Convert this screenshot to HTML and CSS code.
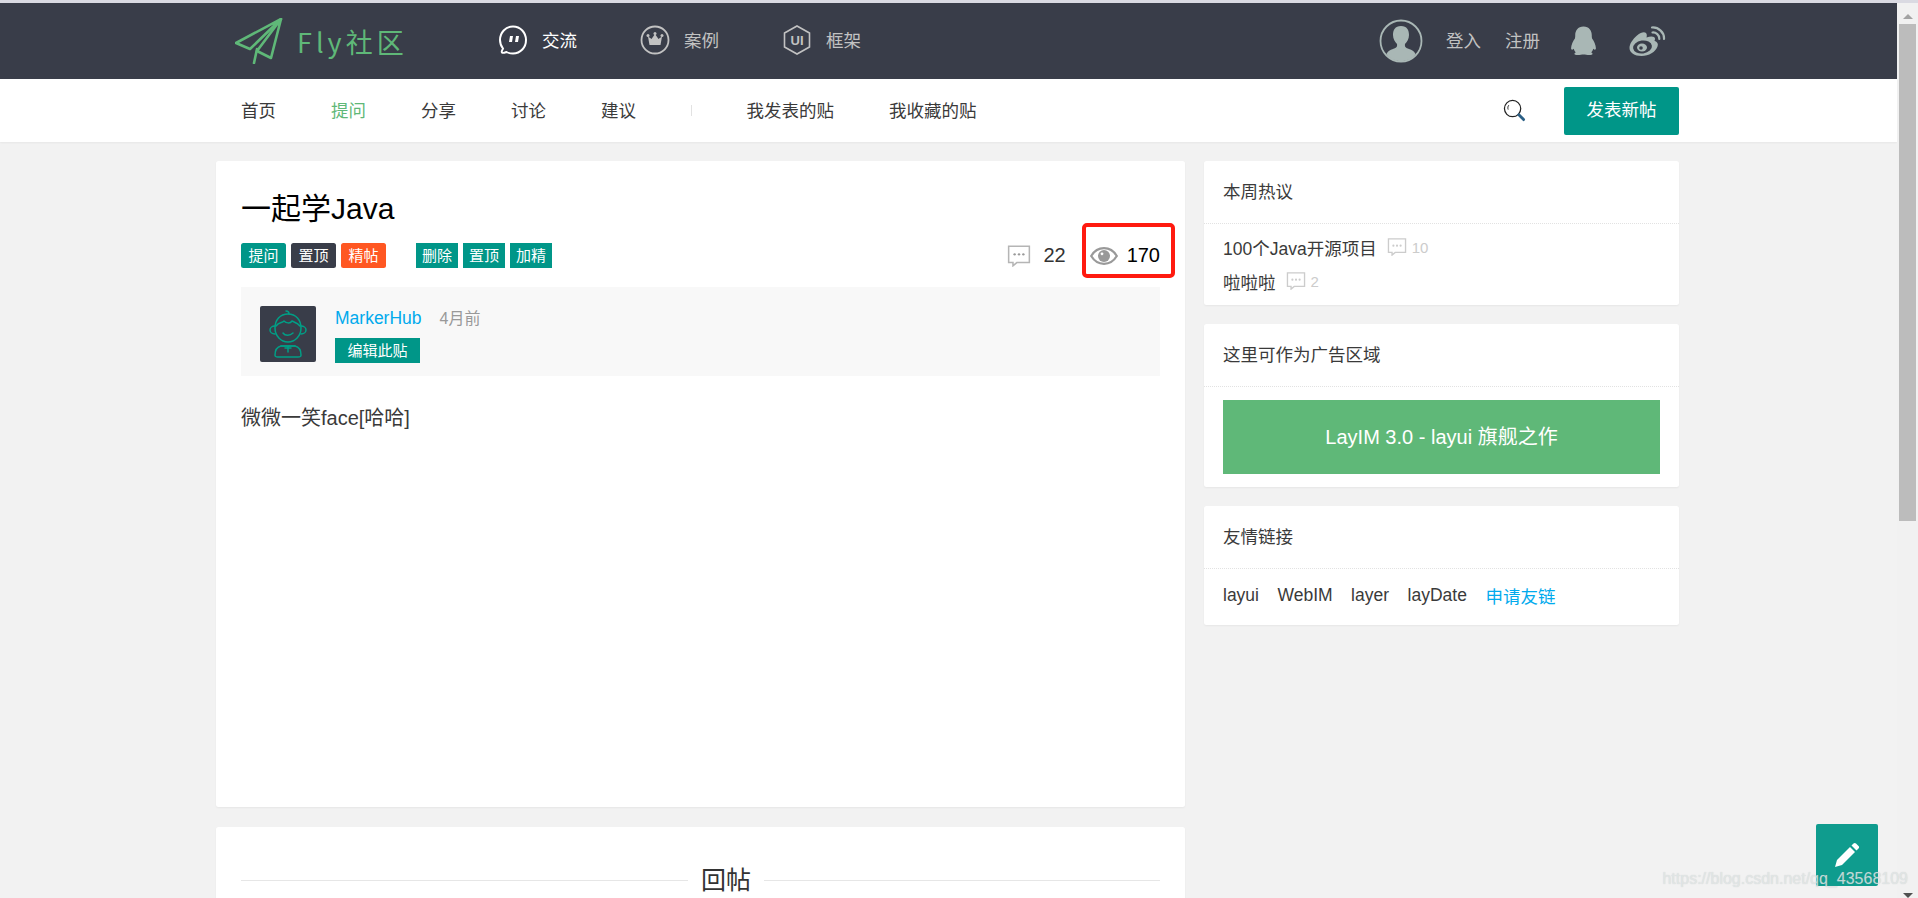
FILE: index.html
```html
<!DOCTYPE html>
<html lang="zh-CN">
<head>
<meta charset="UTF-8">
<title>一起学Java - Fly社区</title>
<link rel="stylesheet" href="styles.css">
</head>
<body>
<div class="top-strip"></div>
<div class="app">
<div class="page">

    <!-- 顶部导航 -->
    <header class="header">
        <div class="logo">
            <svg class="logo-icon" viewBox="0 0 48 46" fill="none" stroke="#5fb878" stroke-width="2.600" stroke-linecap="round" stroke-linejoin="round">
                <path d="M46 1 1 25 15 31Z"/>
                <path d="M46 1 36 40 22 33Z"/>
                <path d="M22 31 19 45"/>
            </svg>
            <span class="logo-text">Fly社区</span>
        </div>
        <nav class="main-nav">
            <a class="main-nav-item active">
                <svg class="nav-icon" viewBox="0 0 30 30">
                    <path d="M15 1.500C7.500 1.500 2 7.500 2 15c0 3.500 1 6 3 8.500-.5 1.500-2 3-1 4s3 0 4.500-.5c2 1.200 4 1.500 6.500 1.500 7.500 0 13-6 13-13.500S22.500 1.500 15 1.500Z" fill="none" stroke="#fff" stroke-width="2"/>
                    <path d="M12 11h3l-1 6h-3ZM18 11h3l-1 6h-3Z" fill="#fff"/>
                </svg>
                交流
            </a>
            <a class="main-nav-item">
                <svg class="nav-icon" viewBox="0 0 30 30">
                    <circle cx="15" cy="15" r="13.500" fill="none" stroke="#c2c2c2" stroke-width="1.800"/>
                    <path d="M8 11.500l3.500 2.500L15 9l3.500 5 3.500-2.500L20.500 20h-11Z" fill="#c2c2c2"/>
                    <circle cx="8" cy="10.500" r="1.500" fill="#c2c2c2"/>
                    <circle cx="15" cy="8.500" r="1.500" fill="#c2c2c2"/>
                    <circle cx="22" cy="10.500" r="1.500" fill="#c2c2c2"/>
                </svg>
                案例
            </a>
            <a class="main-nav-item">
                <svg class="nav-icon" viewBox="0 0 28 30">
                    <path d="M14 1 26.500 8v14L14 29 1.500 22V8Z" fill="none" stroke="#c2c2c2" stroke-width="1.600"/>
                    <text x="14" y="20" text-anchor="middle" class="ui-mark">UI</text>
                </svg>
                框架
            </a>
        </nav>
        <div class="user-nav">
            <svg class="user-avatar" viewBox="0 0 44 44">
                <circle cx="22" cy="22" r="20.500" fill="none" stroke="#a9b7b5" stroke-width="1.800"/>
                <path d="M22 7c-6 0-8 4-8 9 0 4 2 7 4 9 .5 3-1 4-4 5-3 1-5 2-6.500 5C11 40 16 42 22 42s11-2 14.500-7c-1.500-3-3.500-4-6.500-5-3-1-4.500-2-4-5 2-2 4-5 4-9 0-5-2-9-8-9Z" fill="#a9b7b5"/>
            </svg>
            <a class="user-link">登入</a>
            <a class="user-link">注册</a>
            <svg class="qq-icon" viewBox="0 0 26 29">
                <path d="M13 .5C7.500.5 5 4.500 5 9c0 1.200 0 2-.3 3C3 14.500 1 18 1 21.500c0 1.500 1 2 2.500.5.500 1.500 1 2.500 2 3.500C4 26 3.500 27.500 6 28c2.500.5 5-.5 7-.5s4.500 1 7 .5c2.500-.5 2-2 .5-2.500 1-1 1.500-2 2-3.500 1.500 1.500 2.500 1 2.500-.5 0-3.500-2-7-3.700-9.500-.3-1-.3-1.800-.3-3C21 4.500 18.500.5 13 .5Z" fill="#a9b7b5"/>
            </svg>
            <svg class="weibo-icon" viewBox="0 0 37 31">
                <path d="M26 15c2.500 1 3.500 3 2.500 5.500C26.500 26 20 30 12.500 30 5.500 30 .5 26.500.5 22c0-4 3-8.500 7.500-12.500 4-3.500 7.500-4 9-2.500 1 1 1 2.800.5 4.500 3-1.200 6-1.500 7.500-.5 1.200.8 1.300 2.200.5 4Z" fill="#a9b7b5"/>
                <ellipse cx="13.500" cy="21" rx="9.500" ry="6.500" fill="#393d49" transform="rotate(-8 13.500 21)"/>
                <ellipse cx="13" cy="21.500" rx="5" ry="4" fill="#a9b7b5"/>
                <circle cx="12" cy="22" r="1.800" fill="#393d49"/>
                <path d="M23 1.500c6.500-.5 12.500 5 12 11.500M23.500 6.500c3.500-.3 7 2.500 6.800 6.500" fill="none" stroke="#a9b7b5" stroke-width="2.200" stroke-linecap="round"/>
            </svg>
        </div>
    </header>

    <!-- 二级导航 -->
    <div class="sub-nav">
        <a class="sub-nav-item">首页</a>
        <a class="sub-nav-item current">提问</a>
        <a class="sub-nav-item">分享</a>
        <a class="sub-nav-item">讨论</a>
        <a class="sub-nav-item">建议</a>
        <span class="sub-nav-divider"></span>
        <a class="sub-nav-item">我发表的贴</a>
        <a class="sub-nav-item">我收藏的贴</a>
        <svg class="search-icon" viewBox="0 0 24 24" fill="none" stroke="#222">
            <circle cx="10" cy="10" r="8.500" stroke-width="1.300"/>
            <path d="M6 6.500c-1 1.200-1.200 3-.6 4.500" stroke-width="1"/>
            <path d="M16.500 16.500l5 5" stroke="#2b5f85" stroke-width="3" stroke-linecap="round"/>
        </svg>
        <a class="new-post">发表新帖</a>
    </div>

    <div class="content">
        <div class="content-main">
            <div class="panel post">
                <h1 class="post-title">一起学Java</h1>
                <div class="post-tags">
                    <span class="tag round">提问</span>
                    <span class="tag round dark">置顶</span>
                    <span class="tag round orange">精帖</span>
                    <span class="tag admin first">删除</span>
                    <span class="tag admin">置顶</span>
                    <span class="tag admin">加精</span>
                    <div class="post-stats">
                        <svg class="comment-icon" viewBox="0 0 22 20">
                            <path d="M1.500 1h19v15H9l-3.500 3v-3h-4Z" fill="none" stroke="#b5b5b5" stroke-width="1.400"/>
                            <circle cx="7" cy="8.500" r="1.100" fill="#999"/>
                            <circle cx="11" cy="8.500" r="1.100" fill="#999"/>
                            <circle cx="15" cy="8.500" r="1.100" fill="#999"/>
                        </svg>
                        <span class="stat-num">22</span>
                        <svg class="eye-icon" viewBox="0 0 28 18">
                            <path d="M1.200 9C4.500 3.500 9 1.200 14 1.200s9.500 2.300 12.800 7.800C23.500 14.500 19 16.800 14 16.800S4.500 14.500 1.200 9Z" fill="none" stroke="#999" stroke-width="2.200"/>
                            <circle cx="14" cy="9" r="6" fill="#999"/>
                            <circle cx="12" cy="6.800" r="1.400" fill="#fff"/>
                        </svg>
                        <span class="stat-num dark-num">170</span>
                        <span class="mark-box"></span>
                    </div>
                </div>
                <div class="author">
                    <svg class="author-avatar" viewBox="0 0 56 56" fill="none" stroke="#009f86" stroke-width="1.500" stroke-linecap="round" stroke-linejoin="round">
                        <rect width="56" height="56" rx="2" fill="#393d49" stroke="none"/>
                        <path d="M28 8c-8 0-13 6-13 14 0 8 6 14 13 14s13-6 13-14c0-8-5-14-13-14Z"/>
                        <path d="M16 20c3-4 6-3 8-5 2 2 6 3 8 0 2 1 6 2 8 5"/>
                        <path d="M26 5c2 0 3 1 3 3"/>
                        <path d="M15 20c-3 0-5 2-5 4s2 4 5 4M41 20c3 0 5 2 5 4s-2 4-5 4"/>
                        <path d="M23 27c2 3 7 3 10 0"/>
                        <path d="M21 40c-4 1-6 5-6 9 0 2 1 2 3 2h20c2 0 3 0 3-2 0-4-2-8-6-9Z"/>
                        <path d="M21 40h14M28 40v6M25 42h6"/>
                    </svg>
                    <div class="author-info">
                        <div class="author-line">
                            <a class="author-name">MarkerHub</a>
                            <span class="author-time">4月前</span>
                        </div>
                        <a class="tag edit-post">编辑此贴</a>
                    </div>
                </div>
                <div class="post-body">微微一笑face[哈哈]</div>
            </div>

            <div class="panel reply">
                <div class="reply-title"><span>回帖</span></div>
            </div>
        </div>

        <div class="sidebar">
            <div class="panel side-panel">
                <h3 class="side-title">本周热议</h3>
                <ul class="hot-list">
                    <li class="hot-item">
                        <a>100个Java开源项目</a>
                        <svg class="comment-small" viewBox="0 0 22 20">
                            <path d="M1.500 1h19v15H9l-3.500 3v-3h-4Z" fill="none" stroke="#ccc" stroke-width="1.500"/>
                            <circle cx="7" cy="8.500" r="1.200" fill="#ccc"/>
                            <circle cx="11" cy="8.500" r="1.200" fill="#ccc"/>
                            <circle cx="15" cy="8.500" r="1.200" fill="#ccc"/>
                        </svg>
                        <span class="hot-num">10</span>
                    </li>
                    <li class="hot-item">
                        <a>啦啦啦</a>
                        <svg class="comment-small" viewBox="0 0 22 20">
                            <path d="M1.500 1h19v15H9l-3.500 3v-3h-4Z" fill="none" stroke="#ccc" stroke-width="1.500"/>
                            <circle cx="7" cy="8.500" r="1.200" fill="#ccc"/>
                            <circle cx="11" cy="8.500" r="1.200" fill="#ccc"/>
                            <circle cx="15" cy="8.500" r="1.200" fill="#ccc"/>
                        </svg>
                        <span class="hot-num">2</span>
                    </li>
                </ul>
            </div>

            <div class="panel side-panel">
                <h3 class="side-title">这里可作为广告区域</h3>
                <div class="ad-wrap">
                    <a class="ad">LayIM 3.0 - layui 旗舰之作</a>
                </div>
            </div>

            <div class="panel side-panel">
                <h3 class="side-title">友情链接</h3>
                <div class="friend-links">
                    <a>layui</a>
                    <a>WebIM</a>
                    <a>layer</a>
                    <a>layDate</a>
                    <a class="apply-link">申请友链</a>
                </div>
            </div>
        </div>
    </div>
</div>

<div class="scrollbar">
    <span class="scroll-arrow up"></span>
    <span class="scroll-thumb"></span>
    <span class="scroll-arrow down"></span>
</div>
</div>

<a class="fab">
    <svg viewBox="0 0 26 26" class="fab-icon">
        <path d="M1 25l2-7L16 5l5 5L8 23Z" fill="#fff"/>
        <path d="M17.500 3.500 19.500 1.500c.8-.8 1.700-.8 2.500 0l2.500 2.500c.8.800.8 1.700 0 2.500l-2 2Z" fill="#fff"/>
    </svg>
</a>
<div class="watermark">https://blog.csdn.net/qq_43568109</div>
</body>
</html>
```

FILE: styles.css
```css
* {
box-sizing: border-box;
}
html {
overflow: hidden;
}
body {
margin: 0;
height: 898px;
position: relative;
overflow: hidden;
background-color: #f2f2f2;
color: #3a3a3a;
font-family: "Liberation Sans", "Noto Sans CJK SC", sans-serif;
font-size: 17.5px;
}
a {
color: inherit;
text-decoration: none;
}
.top-strip {
height: 3px;
background-color: #dadae2;
}
.app {
display: flex;
height: 895px;
}
.page {
flex: 1;
min-width: 0;
overflow: hidden;
}

/* header */
.header {
height: 76px;
padding-left: 235px;
display: flex;
align-items: center;
background-color: #393d49;
}
.logo {
display: flex;
align-items: center;
width: 263px;
}
.logo-icon {
width: 48px;
height: 46px;
}
.logo-text {
margin-left: 14px;
color: #5fb878;
font-size: 27px;
letter-spacing: 4px;
font-family: "Noto Sans CJK SC", sans-serif;
}
.main-nav {
display: flex;
margin-bottom: 4px;
}
.main-nav-item {
display: flex;
align-items: center;
width: 142px;
color: #c2c2c2;
}
.main-nav-item.active {
color: #fff;
}
.nav-icon {
width: 30px;
height: 30px;
margin-top: 2px;
margin-right: 14px;
}
.ui-mark {
font-family: "Liberation Sans", sans-serif;
font-size: 13px;
font-weight: bold;
fill: #c2c2c2;
}
.user-nav {
margin-left: 455px;
display: flex;
align-items: center;
color: #c2c2c2;
}
.user-avatar {
width: 44px;
height: 44px;
margin-right: 23px;
}
.user-link {
margin-right: 24px;
margin-bottom: 4px;
}
.qq-icon {
width: 27px;
height: 30px;
margin-left: 6px;
margin-right: 32px;
}
.weibo-icon {
width: 37px;
height: 31px;
}

/* sub nav */
.sub-nav {
height: 63px;
padding-left: 241px;
padding-right: 218px;
display: flex;
align-items: center;
background-color: #fff;
box-shadow: 0 1px 2px rgba(0,0,0,0.05);
position: relative;
}
.sub-nav-item {
margin-right: 55px;
margin-bottom: 2px;
}
.sub-nav-item.current {
color: #5fb878;
}
.sub-nav-divider {
width: 1px;
height: 11px;
background-color: #e2e2e2;
margin-right: 54.500px;
}
.search-icon {
width: 23px;
height: 23px;
margin-left: auto;
margin-right: 38px;
}
.new-post {
width: 115px;
height: 48px;
line-height: 46px;
text-align: center;
color: #fff;
background-color: #009688;
border-radius: 2px;
}

/* layout */
.content {
width: 1463px;
margin-left: 216px;
padding-top: 19px;
display: flex;
gap: 19px;
align-items: flex-start;
}
.content-main {
width: 969px;
flex-shrink: 0;
}
.sidebar {
flex: 1;
}
.panel {
background-color: #fff;
border-radius: 2.500px;
box-shadow: 0 1px 2px rgba(0,0,0,0.05);
}

/* post */
.post {
height: 646px;
padding: 28px 25px 0;
}
.post-title {
margin: 0;
font-size: 30px;
line-height: 40px;
font-weight: 400;
color: #000;
}
.post-tags {
margin-top: 14px;
display: flex;
gap: 5px;
position: relative;
}
.tag {
display: inline-block;
height: 25px;
line-height: 25px;
padding: 0 7.500px;
font-size: 15px;
color: #fff;
background-color: #009688;
}
.tag.round {
border-radius: 2.500px;
}
.tag.dark {
background-color: #393d49;
}
.tag.orange {
background-color: #ff5722;
}
.tag.admin {
padding: 0 6px;
}
.tag.first {
margin-left: 25px;
}
.post-stats {
margin-left: auto;
display: flex;
align-items: center;
position: relative;
}
.comment-icon {
width: 24px;
height: 22px;
margin-right: 12px;
}
.stat-num {
font-size: 20px;
color: #333;
margin-right: 24px;
}
.dark-num {
color: #000;
margin-right: 0;
}
.eye-icon {
width: 28px;
height: 18px;
margin-right: 9px;
}
.mark-box {
position: absolute;
right: -15px;
top: -20px;
width: 93px;
height: 55px;
border: 4px solid #ff1a0f;
border-radius: 5px;
}
.author {
margin-top: 19px;
height: 89px;
padding: 19px 19px 0;
display: flex;
background-color: #f8f8f8;
}
.author-avatar {
width: 56px;
height: 56px;
margin-right: 19px;
}
.author-info {
display: flex;
flex-direction: column;
align-items: flex-start;
}
.author-line {
height: 25px;
margin-bottom: 7px;
display: flex;
align-items: center;
}
.author-name {
color: #01aaed;
}
.author-time {
margin-left: 18px;
margin-bottom: 4px;
font-size: 16px;
color: #999;
}
.edit-post {
padding: 0 12.500px;
}
.post-body {
margin-top: 27px;
font-size: 20px;
line-height: 30px;
}

/* reply */
.reply {
margin-top: 20px;
height: 200px;
padding: 35px 25px 0;
}
.reply-title {
display: flex;
align-items: center;
gap: 13px;
font-size: 25px;
line-height: 36px;
color: #333;
}
.reply-title::before,
.reply-title::after {
content: "";
height: 1px;
background-color: #e6e6e6;
}
.reply-title::before {
width: 447px;
}
.reply-title::after {
flex: 1;
}

/* sidebar */
.side-panel {
margin-bottom: 19px;
}
.side-title {
margin: 0;
height: 63px;
line-height: 62px;
padding: 0 19px;
font-size: 17.500px;
font-weight: 400;
border-bottom: 1px dotted #e2e2e2;
}
.hot-list {
margin: 0;
padding: 6px 19px 7px;
list-style: none;
}
.hot-item {
height: 34px;
display: flex;
align-items: center;
}
.comment-small {
width: 20px;
height: 18px;
margin-left: 10px;
margin-right: 5px;
}
.hot-num {
font-size: 15px;
color: #ccc;
}
.ad-wrap {
padding: 13px 19px;
}
.ad {
display: block;
height: 74px;
line-height: 74px;
text-align: center;
font-size: 20px;
color: #fff;
background-color: #5fb878;
}
.friend-links {
padding: 12px 19px 15px;
height: 56px;
display: flex;
align-items: center;
gap: 18.500px;
}
.apply-link {
color: #01aaed;
}

/* scrollbar */
.scrollbar {
width: 21px;
flex-shrink: 0;
padding: 0 2px;
display: flex;
flex-direction: column;
align-items: center;
background-color: #f1f1f1;
}
.scroll-arrow {
width: 0;
height: 0;
border-left: 5px solid transparent;
border-right: 5px solid transparent;
}
.scroll-arrow.up {
margin-top: 11px;
border-bottom: 5px solid #a3a3a3;
}
.scroll-arrow.down {
margin-top: auto;
margin-bottom: 0;
border-top: 5px solid #505050;
}
.scroll-thumb {
width: 17px;
height: 497px;
margin-top: 5px;
background-color: #bcbcbc;
}

/* floating */
.fab {
position: absolute;
left: 1816px;
top: 824px;
width: 62px;
height: 62px;
display: flex;
align-items: center;
justify-content: center;
background-color: #0f9c8e;
border-radius: 2px;
}
.fab-icon {
width: 26px;
height: 26px;
}
.watermark {
position: absolute;
right: 10px;
top: 868px;
font-size: 16px;
line-height: 22px;
color: rgba(228,234,234,0.8);
text-shadow: 0 0 1px rgba(150,150,150,0.4);
}
```
